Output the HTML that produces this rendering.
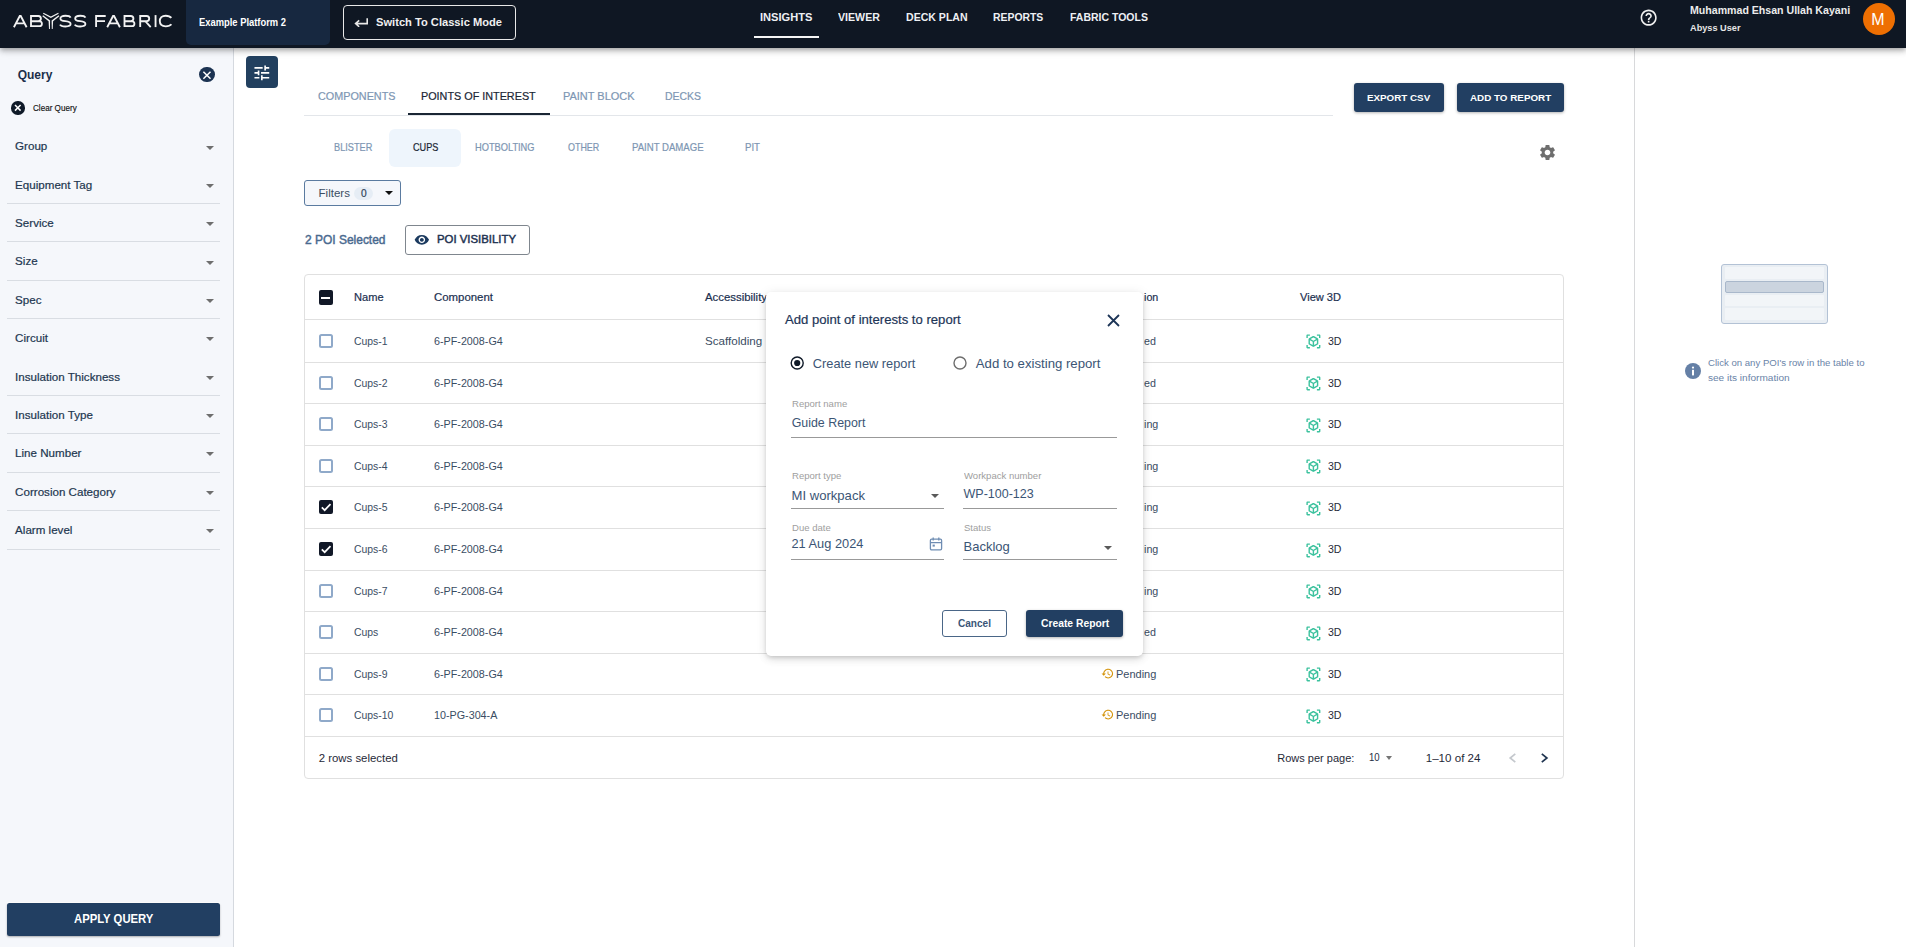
<!DOCTYPE html>
<html><head><meta charset="utf-8"><title>Abyss Fabric</title>
<style>
html,body{margin:0;padding:0;}
body{width:1906px;height:947px;overflow:hidden;position:relative;background:#fff;font-family:"Liberation Sans", sans-serif;}
body>div{position:absolute;box-sizing:content-box;}
.t{white-space:pre;}
</style></head><body>
<div style="left:0px;top:0px;width:1906px;height:48px;background:#0f1723;box-shadow:0 2px 4px -1px rgba(0,0,0,.2),0 4px 5px 0 rgba(0,0,0,.14),0 1px 10px 0 rgba(0,0,0,.12);z-index:5"></div>
<svg style="position:absolute;left:0px;top:0px;z-index:6" width="180" height="48" viewBox="0 0 180 48"><g fill="none" stroke="#f2f2f2" stroke-width="1.85" stroke-linejoin="miter" stroke-miterlimit="10">
<path d="M13.9 27.2 L19.75 15.95 H20.75 L26.6 27.2 M16.2 23.3 H24.3"/>
<path d="M31 16 H38.3 A2.6 2.6 0 0 1 38.3 21.2 H31 M31 21.2 H39.45 A2.45 2.45 0 0 1 39.45 26.1 H31 Z M31 15.1 V27"/>
<path d="M70.6 17.7 C70 16.3 68 15.8 65.4 15.8 C62.2 15.8 60.4 16.7 60.4 18.5 C60.4 20.6 62.6 21 65.4 21.2 C68.6 21.4 70.6 22 70.6 24.1 C70.6 25.9 68.6 26.5 65.4 26.5 C62.8 26.5 60.8 26.1 60 24.6"/>
<path d="M85.4 17.7 C84.8 16.3 82.8 15.8 80.2 15.8 C77 15.8 75.2 16.7 75.2 18.5 C75.2 20.6 77.4 21 80.2 21.2 C83.4 21.4 85.4 22 85.4 24.1 C85.4 25.9 83.4 26.5 80.2 26.5 C77.6 26.5 75.6 26.1 74.8 24.6"/>
<path d="M96.1 27.1 V16 H105.7 M96.1 21.1 H105"/>
<path d="M107.2 27.2 L113.05 15.95 H114.05 L119.9 27.2 M109.5 23.3 H117.6"/>
<path d="M124.5 16 H130.8 A2.6 2.6 0 0 1 130.8 21.2 H124.5 M124.5 21.2 H131.95 A2.45 2.45 0 0 1 131.95 26.1 H124.5 Z M124.5 15.1 V27"/>
<path d="M140.2 27.1 V16 H146.6 A2.6 2.6 0 0 1 146.6 21.2 H140.2 M145.3 21.2 L150.7 27.2"/>
<path d="M155.55 15.1 V27.1"/>
<path d="M171.3 17.9 C170.2 16.4 168.2 15.7 165.7 15.7 C161.9 15.7 159.8 18.1 159.8 21.1 C159.8 24.2 161.9 26.3 165.7 26.3 C168.2 26.3 170.3 25.6 171.4 24.2"/>
</g>
<g fill="#f2f2f2">
<path d="M43.5 12.8 L50.85 16.4 L58.2 12.8 L58.7 13.8 L50.85 17.9 L43.0 13.8 Z"/>
<path d="M42.3 16.3 L43.1 15.3 L50.1 20.4 L49.9 28.9 L49.0 28.9 L48.6 21.3 Z"/>
<path d="M59.4 16.3 L58.6 15.3 L51.6 20.4 L51.8 28.9 L52.7 28.9 L53.1 21.3 Z"/>
</g></svg>
<div style="left:186px;top:0px;width:144px;height:45px;background:#172840;border-radius:0 0 5px 5px;z-index:6"></div>
<div class="t" style="left:199px;top:18px;font-size:10px;line-height:10px;color:#ffffff;font-weight:700;transform:scaleX(0.9374);transform-origin:0 0;z-index:7">Example Platform 2</div>
<div style="left:343px;top:5px;width:171px;height:33px;border:1px solid #e8e8e8;border-radius:4px;z-index:6"></div>
<svg style="position:absolute;left:353px;top:15px;z-index:7" width="16" height="12" viewBox="0 0 16 12"><path d="M14.2 3.2 V8.6 H3.2 M6.2 5.4 L2.6 8.6 L6.2 11.8" fill="none" stroke="#e8e8e8" stroke-width="1.6"/></svg>
<div class="t" style="left:375.7px;top:17px;font-size:11.3px;line-height:11.3px;color:#f0f0f0;font-weight:700;transform:scaleX(0.9855);transform-origin:0 0;z-index:7">Switch To Classic Mode</div>
<div class="t" style="left:760px;top:12px;font-size:11.3px;line-height:11.3px;color:#eef0f3;font-weight:700;transform:scaleX(0.9820);transform-origin:0 0;z-index:7">INSIGHTS</div>
<div class="t" style="left:837.8px;top:12px;font-size:11.3px;line-height:11.3px;color:#eef0f3;font-weight:700;transform:scaleX(0.9399);transform-origin:0 0;z-index:7">VIEWER</div>
<div class="t" style="left:905.6px;top:12px;font-size:11.3px;line-height:11.3px;color:#eef0f3;font-weight:700;transform:scaleX(0.9347);transform-origin:0 0;z-index:7">DECK PLAN</div>
<div class="t" style="left:993.4px;top:12px;font-size:11.3px;line-height:11.3px;color:#eef0f3;font-weight:700;transform:scaleX(0.9211);transform-origin:0 0;z-index:7">REPORTS</div>
<div class="t" style="left:1069.9px;top:12px;font-size:11.3px;line-height:11.3px;color:#eef0f3;font-weight:700;transform:scaleX(0.9284);transform-origin:0 0;z-index:7">FABRIC TOOLS</div>
<div style="left:754px;top:36px;width:65px;height:2px;background:#f5f5f5;z-index:7"></div>
<svg style="position:absolute;left:1638.8px;top:8.3px;z-index:7" width="19.3" height="19.3" viewBox="0 0 24 24"><path d="M11 18h2v-2h-2v2zm1-16C6.48 2 2 6.48 2 12s4.48 10 10 10 10-4.48 10-10S17.52 2 12 2zm0 18c-4.41 0-8-3.59-8-8s3.59-8 8-8 8 3.59 8 8-3.59 8-8 8zm0-14c-2.21 0-4 1.79-4 4h2c0-1.1.9-2 2-2s2 .9 2 2c0 2-3 1.75-3 5h2c0-2.25 3-2.5 3-5 0-2.21-1.79-4-4-4z" fill="#f0f0f0"/></svg>
<div class="t" style="left:1689.9px;top:4px;font-size:11.6px;line-height:11.6px;color:#ececec;font-weight:700;transform:scaleX(0.9136);transform-origin:0 0;z-index:7">Muhammad Ehsan Ullah Kayani</div>
<div class="t" style="left:1689.9px;top:23px;font-size:9.6px;line-height:9.6px;color:#e6e6e6;font-weight:700;transform:scaleX(0.9565);transform-origin:0 0;z-index:7">Abyss User</div>
<div style="left:1863px;top:3px;width:32px;height:32px;background:#ee6f02;border-radius:50%;z-index:7"></div>
<div class="t" style="left:1871.3px;top:12px;font-size:16px;line-height:16px;color:#ffffff;font-weight:400;z-index:8">M</div>
<div style="left:0px;top:48px;width:233px;height:899px;background:#f5f7fb;border-right:1px solid #d5d9df"></div>
<div class="t" style="left:17.7px;top:69px;font-size:12px;line-height:12px;color:#1b2f4a;font-weight:700;">Query</div>
<div style="left:198.8px;top:66.5px;width:15.8px;height:15.8px;background:#1c3352;border-radius:50%"></div>
<svg style="position:absolute;left:198.8px;top:66.5px;" width="16" height="16" viewBox="0 0 16 16"><path d="M4.4 4.7 L11.5 11.7 M11.5 4.7 L4.4 11.7" stroke="#fff" stroke-width="1.5"/></svg>
<div style="left:11.4px;top:101.2px;width:13.4px;height:13.4px;background:#0f1a28;border-radius:50%"></div>
<svg style="position:absolute;left:11.4px;top:101.2px;" width="14" height="14" viewBox="0 0 14 14"><path d="M4 4 L9.6 9.6 M9.6 4 L4 9.6" stroke="#fff" stroke-width="1.5"/></svg>
<div class="t" style="left:32.5px;top:104px;font-size:8.8px;line-height:8.8px;color:#111;font-weight:400;transform:scaleX(0.9215);transform-origin:0 0;-webkit-text-stroke:0.15px currentColor">Clear Query</div>
<div class="t" style="left:15.1px;top:140px;font-size:11.6px;line-height:11.6px;color:#22364f;font-weight:400;-webkit-text-stroke:0.2px currentColor">Group</div>
<div style="left:206.2px;top:146px;width:0;height:0;border-left:4.1px solid transparent;border-right:4.1px solid transparent;border-top:4.2px solid #6e6e6e;"></div>
<div class="t" style="left:15.1px;top:179px;font-size:11.6px;line-height:11.6px;color:#22364f;font-weight:400;-webkit-text-stroke:0.2px currentColor">Equipment Tag</div>
<div style="left:206.2px;top:184px;width:0;height:0;border-left:4.1px solid transparent;border-right:4.1px solid transparent;border-top:4.2px solid #6e6e6e;"></div>
<div class="t" style="left:15.1px;top:217px;font-size:11.6px;line-height:11.6px;color:#22364f;font-weight:400;-webkit-text-stroke:0.2px currentColor">Service</div>
<div style="left:206.2px;top:222px;width:0;height:0;border-left:4.1px solid transparent;border-right:4.1px solid transparent;border-top:4.2px solid #6e6e6e;"></div>
<div class="t" style="left:15.1px;top:255px;font-size:11.6px;line-height:11.6px;color:#22364f;font-weight:400;-webkit-text-stroke:0.2px currentColor">Size</div>
<div style="left:206.2px;top:261px;width:0;height:0;border-left:4.1px solid transparent;border-right:4.1px solid transparent;border-top:4.2px solid #6e6e6e;"></div>
<div class="t" style="left:15.1px;top:294px;font-size:11.6px;line-height:11.6px;color:#22364f;font-weight:400;-webkit-text-stroke:0.2px currentColor">Spec</div>
<div style="left:206.2px;top:299px;width:0;height:0;border-left:4.1px solid transparent;border-right:4.1px solid transparent;border-top:4.2px solid #6e6e6e;"></div>
<div class="t" style="left:15.1px;top:332px;font-size:11.6px;line-height:11.6px;color:#22364f;font-weight:400;-webkit-text-stroke:0.2px currentColor">Circuit</div>
<div style="left:206.2px;top:337px;width:0;height:0;border-left:4.1px solid transparent;border-right:4.1px solid transparent;border-top:4.2px solid #6e6e6e;"></div>
<div class="t" style="left:15.1px;top:371px;font-size:11.6px;line-height:11.6px;color:#22364f;font-weight:400;-webkit-text-stroke:0.2px currentColor">Insulation Thickness</div>
<div style="left:206.2px;top:376px;width:0;height:0;border-left:4.1px solid transparent;border-right:4.1px solid transparent;border-top:4.2px solid #6e6e6e;"></div>
<div class="t" style="left:15.1px;top:409px;font-size:11.6px;line-height:11.6px;color:#22364f;font-weight:400;-webkit-text-stroke:0.2px currentColor">Insulation Type</div>
<div style="left:206.2px;top:414px;width:0;height:0;border-left:4.1px solid transparent;border-right:4.1px solid transparent;border-top:4.2px solid #6e6e6e;"></div>
<div class="t" style="left:15.1px;top:447px;font-size:11.6px;line-height:11.6px;color:#22364f;font-weight:400;-webkit-text-stroke:0.2px currentColor">Line Number</div>
<div style="left:206.2px;top:452px;width:0;height:0;border-left:4.1px solid transparent;border-right:4.1px solid transparent;border-top:4.2px solid #6e6e6e;"></div>
<div class="t" style="left:15.1px;top:486px;font-size:11.6px;line-height:11.6px;color:#22364f;font-weight:400;-webkit-text-stroke:0.2px currentColor">Corrosion Category</div>
<div style="left:206.2px;top:491px;width:0;height:0;border-left:4.1px solid transparent;border-right:4.1px solid transparent;border-top:4.2px solid #6e6e6e;"></div>
<div class="t" style="left:15.1px;top:524px;font-size:11.6px;line-height:11.6px;color:#22364f;font-weight:400;-webkit-text-stroke:0.2px currentColor">Alarm level</div>
<div style="left:206.2px;top:529px;width:0;height:0;border-left:4.1px solid transparent;border-right:4.1px solid transparent;border-top:4.2px solid #6e6e6e;"></div>
<div style="left:7px;top:203px;width:213px;height:1px;background:#d9dde3"></div>
<div style="left:7px;top:241px;width:213px;height:1px;background:#d9dde3"></div>
<div style="left:7px;top:280px;width:213px;height:1px;background:#d9dde3"></div>
<div style="left:7px;top:318px;width:213px;height:1px;background:#d9dde3"></div>
<div style="left:7px;top:395px;width:213px;height:1px;background:#d9dde3"></div>
<div style="left:7px;top:433px;width:213px;height:1px;background:#d9dde3"></div>
<div style="left:7px;top:472px;width:213px;height:1px;background:#d9dde3"></div>
<div style="left:7px;top:510px;width:213px;height:1px;background:#d9dde3"></div>
<div style="left:7px;top:549px;width:213px;height:1px;background:#d9dde3"></div>
<div style="left:7px;top:902px;width:213px;height:1px;background:#ffffff"></div>
<div style="left:7px;top:903px;width:213px;height:33px;background:#223f62;border-radius:2.5px;box-shadow:0 1px 2px rgba(0,0,0,.3)"></div>
<div class="t" style="left:73.8px;top:913px;font-size:12.3px;line-height:12.3px;color:#ffffff;font-weight:700;transform:scaleX(0.9196);transform-origin:0 0;">APPLY QUERY</div>
<div style="left:1634px;top:48px;width:1px;height:899px;background:#d8d9db"></div>
<div style="left:1721px;top:264px;width:105px;height:58px;background:#e9eef3;border:1px solid #b3c2d5;border-radius:3px"></div>
<div style="left:1725px;top:267px;width:99px;height:12px;background:#f2f5f8;border-radius:1px"></div>
<div style="left:1725px;top:295px;width:99px;height:11px;background:#f2f5f8;border-radius:1px"></div>
<div style="left:1725px;top:308px;width:99px;height:12px;background:#f2f5f8;border-radius:1px"></div>
<div style="left:1725px;top:281px;width:97px;height:10px;background:#cbd4df;border:1px solid #a9b8cb;border-radius:2px"></div>
<div style="left:1684.5px;top:362.5px;width:16px;height:16px;background:#6580a6;border-radius:50%"></div>
<svg style="position:absolute;left:1684.5px;top:362.5px;" width="16" height="16" viewBox="0 0 16 16"><circle cx="8" cy="4.6" r="1.1" fill="#fff"/><rect x="7" y="6.8" width="2" height="5.6" fill="#fff"/></svg>
<div class="t" style="left:1708px;top:358px;font-size:9.6px;line-height:9.6px;color:#6a84a8;font-weight:400;">Click on any POI's row in the table to</div>
<div class="t" style="left:1708px;top:373px;font-size:9.6px;line-height:9.6px;color:#6a84a8;font-weight:400;transform:scaleX(1.0480);transform-origin:0 0;">see its information</div>
<div style="left:246px;top:56px;width:32px;height:32px;background:#22405f;border-radius:4px"></div>
<svg style="position:absolute;left:251.6px;top:62.5px;" width="19.7" height="19.7" viewBox="0 0 24 24"><path d="M3 17v2h6v-2H3zM3 5v2h10V5H3zm10 16v-2h8v-2h-8v-2h-2v6h2zM7 9v2H3v2h4v2h2V9H7zm14 4v-2H11v2h10zm-6-4h2V7h4V5h-4V3h-2v6z" fill="#ffffff"/></svg>
<div style="left:304px;top:115px;width:1029px;height:1px;background:#e3e6ea"></div>
<div class="t" style="left:317.7px;top:91px;font-size:11.3px;line-height:11.3px;color:#7d96b3;font-weight:400;transform:scaleX(0.9572);transform-origin:0 0;-webkit-text-stroke:0.2px currentColor">COMPONENTS</div>
<div class="t" style="left:421.3px;top:91px;font-size:11.3px;line-height:11.3px;color:#1a2634;font-weight:400;transform:scaleX(0.9567);transform-origin:0 0;-webkit-text-stroke:0.2px currentColor">POINTS OF INTEREST</div>
<div class="t" style="left:562.5px;top:91px;font-size:11.3px;line-height:11.3px;color:#7d96b3;font-weight:400;transform:scaleX(0.9705);transform-origin:0 0;-webkit-text-stroke:0.2px currentColor">PAINT BLOCK</div>
<div class="t" style="left:665px;top:91px;font-size:11.3px;line-height:11.3px;color:#7d96b3;font-weight:400;transform:scaleX(0.9249);transform-origin:0 0;-webkit-text-stroke:0.2px currentColor">DECKS</div>
<div style="left:408px;top:113px;width:142px;height:2px;background:#1a2634"></div>
<div style="left:1354px;top:83px;width:90px;height:29px;background:#223f62;border-radius:3px;box-shadow:0 1px 3px rgba(0,0,0,.3)"></div>
<div class="t" style="left:1367.1px;top:93px;font-size:9.8px;line-height:9.8px;color:#ffffff;font-weight:700;transform:scaleX(1.0007);transform-origin:0 0;">EXPORT CSV</div>
<div style="left:1457px;top:83px;width:107px;height:29px;background:#223f62;border-radius:3px;box-shadow:0 1px 3px rgba(0,0,0,.3)"></div>
<div class="t" style="left:1469.5px;top:93px;font-size:9.8px;line-height:9.8px;color:#ffffff;font-weight:700;transform:scaleX(1.0034);transform-origin:0 0;">ADD TO REPORT</div>
<svg style="position:absolute;left:1537.9px;top:142.9px;" width="19" height="19" viewBox="0 0 24 24"><path d="M19.14 12.94c.04-.3.06-.61.06-.94 0-.32-.02-.64-.07-.94l2.03-1.58c.18-.14.23-.41.12-.61l-1.92-3.32c-.12-.22-.37-.29-.59-.22l-2.39.96c-.5-.38-1.03-.7-1.62-.94l-.36-2.54c-.04-.24-.24-.41-.48-.41h-3.84c-.24 0-.43.17-.47.41l-.36 2.54c-.59.24-1.13.57-1.62.94l-2.39-.96c-.22-.08-.47 0-.59.22L2.74 8.87c-.12.21-.08.47.12.61l2.03 1.58c-.05.3-.09.63-.09.94s.02.64.07.94l-2.03 1.58c-.18.14-.23.41-.12.61l1.92 3.32c.12.22.37.29.59.22l2.39-.96c.5.38 1.03.7 1.62.94l.36 2.54c.05.24.24.41.48.41h3.84c.24 0 .44-.17.47-.41l.36-2.54c.59-.24 1.13-.56 1.62-.94l2.39.96c.22.08.47 0 .59-.22l1.92-3.32c.12-.22.07-.47-.12-.61l-2.01-1.58zM12 15.6c-1.98 0-3.6-1.62-3.6-3.6s1.62-3.6 3.6-3.6 3.6 1.62 3.6 3.6-1.62 3.6-3.6 3.6z" fill="#6e6e6e"/></svg>
<div style="left:389px;top:129px;width:72px;height:38px;background:#eef5fc;border-radius:6px"></div>
<div class="t" style="left:334px;top:143px;font-size:10.3px;line-height:10.3px;color:#7d96b3;font-weight:400;transform:scaleX(0.8923);transform-origin:0 0;-webkit-text-stroke:0.2px currentColor">BLISTER</div>
<div class="t" style="left:412.8px;top:143px;font-size:10.3px;line-height:10.3px;color:#1a2634;font-weight:400;transform:scaleX(0.8878);transform-origin:0 0;-webkit-text-stroke:0.2px currentColor">CUPS</div>
<div class="t" style="left:474.5px;top:143px;font-size:10.3px;line-height:10.3px;color:#7d96b3;font-weight:400;transform:scaleX(0.8992);transform-origin:0 0;-webkit-text-stroke:0.2px currentColor">HOTBOLTING</div>
<div class="t" style="left:567.7px;top:143px;font-size:10.3px;line-height:10.3px;color:#7d96b3;font-weight:400;transform:scaleX(0.8683);transform-origin:0 0;-webkit-text-stroke:0.2px currentColor">OTHER</div>
<div class="t" style="left:632px;top:143px;font-size:10.3px;line-height:10.3px;color:#7d96b3;font-weight:400;transform:scaleX(0.9316);transform-origin:0 0;-webkit-text-stroke:0.2px currentColor">PAINT DAMAGE</div>
<div class="t" style="left:744.9px;top:143px;font-size:10.3px;line-height:10.3px;color:#7d96b3;font-weight:400;transform:scaleX(0.9357);transform-origin:0 0;-webkit-text-stroke:0.2px currentColor">PIT</div>
<div style="left:304px;top:180px;width:95px;height:24px;border:1px solid #5b7ba0;border-radius:3px;background:#f5f7fb"></div>
<div class="t" style="left:318.6px;top:188px;font-size:11.5px;line-height:11.5px;color:#3b4d63;font-weight:400;">Filters</div>
<div style="left:354px;top:187px;width:19px;height:13px;background:#e6edf5;border-radius:7px"></div>
<div class="t" style="left:360.9px;top:189px;font-size:10.2px;line-height:10.2px;color:#2f4258;font-weight:400;-webkit-text-stroke:0.2px currentColor">0</div>
<div style="left:384.8px;top:191.2px;width:0;height:0;border-left:4.1px solid transparent;border-right:4.1px solid transparent;border-top:4.2px solid #111;"></div>
<div class="t" style="left:304.6px;top:234px;font-size:12.4px;line-height:12.4px;color:#4a6a8f;font-weight:400;transform:scaleX(0.9659);transform-origin:0 0;-webkit-text-stroke:0.45px currentColor">2 POI Selected</div>
<div style="left:405px;top:225px;width:123px;height:27.5px;border:1px solid #7f868e;border-radius:3px"></div>
<svg style="position:absolute;left:414.1px;top:232.05px;" width="15.7" height="15.7" viewBox="0 0 24 24"><path d="M12 4.5C7 4.5 2.73 7.61 1 12c1.73 4.39 6 7.5 11 7.5s9.27-3.11 11-7.5c-1.73-4.39-6-7.5-11-7.5zM12 17c-2.76 0-5-2.24-5-5s2.24-5 5-5 5 2.24 5 5-2.24 5-5 5zm0-8c-1.66 0-3 1.34-3 3s1.34 3 3 3 3-1.34 3-3-1.34-3-3-3z" fill="#1b3a5f"/></svg>
<div class="t" style="left:437px;top:234px;font-size:11.3px;line-height:11.3px;color:#1d3150;font-weight:400;transform:scaleX(1.0066);transform-origin:0 0;-webkit-text-stroke:0.45px currentColor">POI VISIBILITY</div>
<div style="left:304px;top:274px;width:1258px;height:503px;border:1px solid #e0e0e0;border-radius:4px;background:#fff"></div>
<div style="left:305px;top:319px;width:1258px;height:1px;background:#e0e0e0"></div>
<div style="left:305px;top:362px;width:1258px;height:1px;background:#e0e0e0"></div>
<div style="left:305px;top:403px;width:1258px;height:1px;background:#e0e0e0"></div>
<div style="left:305px;top:445px;width:1258px;height:1px;background:#e0e0e0"></div>
<div style="left:305px;top:486px;width:1258px;height:1px;background:#e0e0e0"></div>
<div style="left:305px;top:528px;width:1258px;height:1px;background:#e0e0e0"></div>
<div style="left:305px;top:570px;width:1258px;height:1px;background:#e0e0e0"></div>
<div style="left:305px;top:611px;width:1258px;height:1px;background:#e0e0e0"></div>
<div style="left:305px;top:653px;width:1258px;height:1px;background:#e0e0e0"></div>
<div style="left:305px;top:694px;width:1258px;height:1px;background:#e0e0e0"></div>
<div style="left:305px;top:736px;width:1258px;height:1px;background:#e0e0e0"></div>
<div style="left:318.5px;top:290.3px;width:14.3px;height:14.3px;background:#111827;border-radius:2px"></div>
<div style="left:321.3px;top:296.5px;width:8.7px;height:2px;background:#fff"></div>
<div class="t" style="left:353.9px;top:292px;font-size:11.5px;line-height:11.5px;color:#1b3050;font-weight:400;transform:scaleX(0.9646);transform-origin:0 0;-webkit-text-stroke:0.2px currentColor">Name</div>
<div class="t" style="left:433.8px;top:292px;font-size:11.5px;line-height:11.5px;color:#1b3050;font-weight:400;transform:scaleX(0.9921);transform-origin:0 0;-webkit-text-stroke:0.2px currentColor">Component</div>
<div class="t" style="left:704.5px;top:292px;font-size:11.5px;line-height:11.5px;color:#1b3050;font-weight:400;transform:scaleX(0.99);transform-origin:0 0;-webkit-text-stroke:0.2px currentColor">Accessibility</div>
<div class="t" style="left:1144px;top:292px;font-size:11.5px;line-height:11.5px;color:#1b3050;font-weight:400;transform:scaleX(0.93);transform-origin:0 0;-webkit-text-stroke:0.2px currentColor">ion</div>
<div class="t" style="left:1300.3px;top:292px;font-size:11.5px;line-height:11.5px;color:#1b3050;font-weight:400;transform:scaleX(0.9619);transform-origin:0 0;-webkit-text-stroke:0.2px currentColor">View 3D</div>
<div style="left:318.5px;top:333.5px;width:14.2px;height:14.2px;border:2px solid #8fa9c9;border-radius:2.5px;box-sizing:border-box"></div>
<div class="t" style="left:353.9px;top:336px;font-size:11.5px;line-height:11.5px;color:#3a4d63;font-weight:400;transform:scaleX(0.905);transform-origin:0 0;">Cups-1</div>
<div class="t" style="left:433.8px;top:336px;font-size:11.5px;line-height:11.5px;color:#3a4d63;font-weight:400;transform:scaleX(0.935);transform-origin:0 0;">6-PF-2008-G4</div>
<div class="t" style="left:704.5px;top:336px;font-size:11.5px;line-height:11.5px;color:#3a4d63;font-weight:400;transform:scaleX(1.0088);transform-origin:0 0;">Scaffolding</div>
<div class="t" style="left:1144px;top:336px;font-size:11.5px;line-height:11.5px;color:#3a4d63;font-weight:400;transform:scaleX(0.93);transform-origin:0 0;">ed</div>
<svg style="position:absolute;left:1304.5px;top:333.4px;" width="16.8" height="16.8" viewBox="0 0 24 24"><path d="M18.25 7.6l-5.5-3.18c-.46-.27-1.04-.27-1.5 0L5.75 7.6c-.46.27-.75.76-.75 1.3v6.35c0 .54.29 1.03.75 1.3l5.5 3.18c.46.27 1.04.27 1.5 0l5.5-3.18c.46-.27.75-.76.75-1.3V8.9c0-.54-.29-1.03-.75-1.3zM7 14.96v-4.62l4 2.32v4.61l-4-2.31zm5-4.04L8 8.61l4-2.31 4 2.31-4 2.31zm1 6.34v-4.61l4-2.32v4.62l-4 2.31zM7 2H3.5C2.67 2 2 2.67 2 3.5V7h2V4h3V2zm10 0h3.5c.83 0 1.5.67 1.5 1.5V7h-2V4h-3V2zM7 22H3.5c-.83 0-1.5-.67-1.5-1.5V17h2v3h3v2zm10 0h3.5c.83 0 1.5-.67 1.5-1.5V17h-2v3h-3v2z" fill="#3cc29e"/></svg>
<div class="t" style="left:1327.9px;top:336px;font-size:11.5px;line-height:11.5px;color:#1f2937;font-weight:400;transform:scaleX(0.9182);transform-origin:0 0;">3D</div>
<div style="left:318.5px;top:375.5px;width:14.2px;height:14.2px;border:2px solid #8fa9c9;border-radius:2.5px;box-sizing:border-box"></div>
<div class="t" style="left:353.9px;top:378px;font-size:11.5px;line-height:11.5px;color:#3a4d63;font-weight:400;transform:scaleX(0.905);transform-origin:0 0;">Cups-2</div>
<div class="t" style="left:433.8px;top:378px;font-size:11.5px;line-height:11.5px;color:#3a4d63;font-weight:400;transform:scaleX(0.935);transform-origin:0 0;">6-PF-2008-G4</div>
<div class="t" style="left:1144px;top:378px;font-size:11.5px;line-height:11.5px;color:#3a4d63;font-weight:400;transform:scaleX(0.93);transform-origin:0 0;">ed</div>
<svg style="position:absolute;left:1304.5px;top:375.4px;" width="16.8" height="16.8" viewBox="0 0 24 24"><path d="M18.25 7.6l-5.5-3.18c-.46-.27-1.04-.27-1.5 0L5.75 7.6c-.46.27-.75.76-.75 1.3v6.35c0 .54.29 1.03.75 1.3l5.5 3.18c.46.27 1.04.27 1.5 0l5.5-3.18c.46-.27.75-.76.75-1.3V8.9c0-.54-.29-1.03-.75-1.3zM7 14.96v-4.62l4 2.32v4.61l-4-2.31zm5-4.04L8 8.61l4-2.31 4 2.31-4 2.31zm1 6.34v-4.61l4-2.32v4.62l-4 2.31zM7 2H3.5C2.67 2 2 2.67 2 3.5V7h2V4h3V2zm10 0h3.5c.83 0 1.5.67 1.5 1.5V7h-2V4h-3V2zM7 22H3.5c-.83 0-1.5-.67-1.5-1.5V17h2v3h3v2zm10 0h3.5c.83 0 1.5-.67 1.5-1.5V17h-2v3h-3v2z" fill="#3cc29e"/></svg>
<div class="t" style="left:1327.9px;top:378px;font-size:11.5px;line-height:11.5px;color:#1f2937;font-weight:400;transform:scaleX(0.9182);transform-origin:0 0;">3D</div>
<div style="left:318.5px;top:417.0px;width:14.2px;height:14.2px;border:2px solid #8fa9c9;border-radius:2.5px;box-sizing:border-box"></div>
<div class="t" style="left:353.9px;top:419px;font-size:11.5px;line-height:11.5px;color:#3a4d63;font-weight:400;transform:scaleX(0.905);transform-origin:0 0;">Cups-3</div>
<div class="t" style="left:433.8px;top:419px;font-size:11.5px;line-height:11.5px;color:#3a4d63;font-weight:400;transform:scaleX(0.935);transform-origin:0 0;">6-PF-2008-G4</div>
<div class="t" style="left:1144px;top:419px;font-size:11.5px;line-height:11.5px;color:#3a4d63;font-weight:400;transform:scaleX(0.93);transform-origin:0 0;">ing</div>
<svg style="position:absolute;left:1304.5px;top:416.9px;" width="16.8" height="16.8" viewBox="0 0 24 24"><path d="M18.25 7.6l-5.5-3.18c-.46-.27-1.04-.27-1.5 0L5.75 7.6c-.46.27-.75.76-.75 1.3v6.35c0 .54.29 1.03.75 1.3l5.5 3.18c.46.27 1.04.27 1.5 0l5.5-3.18c.46-.27.75-.76.75-1.3V8.9c0-.54-.29-1.03-.75-1.3zM7 14.96v-4.62l4 2.32v4.61l-4-2.31zm5-4.04L8 8.61l4-2.31 4 2.31-4 2.31zm1 6.34v-4.61l4-2.32v4.62l-4 2.31zM7 2H3.5C2.67 2 2 2.67 2 3.5V7h2V4h3V2zm10 0h3.5c.83 0 1.5.67 1.5 1.5V7h-2V4h-3V2zM7 22H3.5c-.83 0-1.5-.67-1.5-1.5V17h2v3h3v2zm10 0h3.5c.83 0 1.5-.67 1.5-1.5V17h-2v3h-3v2z" fill="#3cc29e"/></svg>
<div class="t" style="left:1327.9px;top:419px;font-size:11.5px;line-height:11.5px;color:#1f2937;font-weight:400;transform:scaleX(0.9182);transform-origin:0 0;">3D</div>
<div style="left:318.5px;top:458.5px;width:14.2px;height:14.2px;border:2px solid #8fa9c9;border-radius:2.5px;box-sizing:border-box"></div>
<div class="t" style="left:353.9px;top:461px;font-size:11.5px;line-height:11.5px;color:#3a4d63;font-weight:400;transform:scaleX(0.905);transform-origin:0 0;">Cups-4</div>
<div class="t" style="left:433.8px;top:461px;font-size:11.5px;line-height:11.5px;color:#3a4d63;font-weight:400;transform:scaleX(0.935);transform-origin:0 0;">6-PF-2008-G4</div>
<div class="t" style="left:1144px;top:461px;font-size:11.5px;line-height:11.5px;color:#3a4d63;font-weight:400;transform:scaleX(0.93);transform-origin:0 0;">ing</div>
<svg style="position:absolute;left:1304.5px;top:458.4px;" width="16.8" height="16.8" viewBox="0 0 24 24"><path d="M18.25 7.6l-5.5-3.18c-.46-.27-1.04-.27-1.5 0L5.75 7.6c-.46.27-.75.76-.75 1.3v6.35c0 .54.29 1.03.75 1.3l5.5 3.18c.46.27 1.04.27 1.5 0l5.5-3.18c.46-.27.75-.76.75-1.3V8.9c0-.54-.29-1.03-.75-1.3zM7 14.96v-4.62l4 2.32v4.61l-4-2.31zm5-4.04L8 8.61l4-2.31 4 2.31-4 2.31zm1 6.34v-4.61l4-2.32v4.62l-4 2.31zM7 2H3.5C2.67 2 2 2.67 2 3.5V7h2V4h3V2zm10 0h3.5c.83 0 1.5.67 1.5 1.5V7h-2V4h-3V2zM7 22H3.5c-.83 0-1.5-.67-1.5-1.5V17h2v3h3v2zm10 0h3.5c.83 0 1.5-.67 1.5-1.5V17h-2v3h-3v2z" fill="#3cc29e"/></svg>
<div class="t" style="left:1327.9px;top:461px;font-size:11.5px;line-height:11.5px;color:#1f2937;font-weight:400;transform:scaleX(0.9182);transform-origin:0 0;">3D</div>
<div style="left:318.5px;top:500.0px;width:14.2px;height:14.2px;background:#111827;border-radius:2px"></div>
<svg style="position:absolute;left:318.5px;top:500.0px;" width="14.2" height="14.2" viewBox="0 0 14.2 14.2"><path d="M2.8 7.3 L5.7 10.2 L11.5 4.2" fill="none" stroke="#fff" stroke-width="1.7"/></svg>
<div class="t" style="left:353.9px;top:502px;font-size:11.5px;line-height:11.5px;color:#3a4d63;font-weight:400;transform:scaleX(0.905);transform-origin:0 0;">Cups-5</div>
<div class="t" style="left:433.8px;top:502px;font-size:11.5px;line-height:11.5px;color:#3a4d63;font-weight:400;transform:scaleX(0.935);transform-origin:0 0;">6-PF-2008-G4</div>
<div class="t" style="left:1144px;top:502px;font-size:11.5px;line-height:11.5px;color:#3a4d63;font-weight:400;transform:scaleX(0.93);transform-origin:0 0;">ing</div>
<svg style="position:absolute;left:1304.5px;top:499.9px;" width="16.8" height="16.8" viewBox="0 0 24 24"><path d="M18.25 7.6l-5.5-3.18c-.46-.27-1.04-.27-1.5 0L5.75 7.6c-.46.27-.75.76-.75 1.3v6.35c0 .54.29 1.03.75 1.3l5.5 3.18c.46.27 1.04.27 1.5 0l5.5-3.18c.46-.27.75-.76.75-1.3V8.9c0-.54-.29-1.03-.75-1.3zM7 14.96v-4.62l4 2.32v4.61l-4-2.31zm5-4.04L8 8.61l4-2.31 4 2.31-4 2.31zm1 6.34v-4.61l4-2.32v4.62l-4 2.31zM7 2H3.5C2.67 2 2 2.67 2 3.5V7h2V4h3V2zm10 0h3.5c.83 0 1.5.67 1.5 1.5V7h-2V4h-3V2zM7 22H3.5c-.83 0-1.5-.67-1.5-1.5V17h2v3h3v2zm10 0h3.5c.83 0 1.5-.67 1.5-1.5V17h-2v3h-3v2z" fill="#3cc29e"/></svg>
<div class="t" style="left:1327.9px;top:502px;font-size:11.5px;line-height:11.5px;color:#1f2937;font-weight:400;transform:scaleX(0.9182);transform-origin:0 0;">3D</div>
<div style="left:318.5px;top:542.0px;width:14.2px;height:14.2px;background:#111827;border-radius:2px"></div>
<svg style="position:absolute;left:318.5px;top:542.0px;" width="14.2" height="14.2" viewBox="0 0 14.2 14.2"><path d="M2.8 7.3 L5.7 10.2 L11.5 4.2" fill="none" stroke="#fff" stroke-width="1.7"/></svg>
<div class="t" style="left:353.9px;top:544px;font-size:11.5px;line-height:11.5px;color:#3a4d63;font-weight:400;transform:scaleX(0.905);transform-origin:0 0;">Cups-6</div>
<div class="t" style="left:433.8px;top:544px;font-size:11.5px;line-height:11.5px;color:#3a4d63;font-weight:400;transform:scaleX(0.935);transform-origin:0 0;">6-PF-2008-G4</div>
<div class="t" style="left:1144px;top:544px;font-size:11.5px;line-height:11.5px;color:#3a4d63;font-weight:400;transform:scaleX(0.93);transform-origin:0 0;">ing</div>
<svg style="position:absolute;left:1304.5px;top:541.9px;" width="16.8" height="16.8" viewBox="0 0 24 24"><path d="M18.25 7.6l-5.5-3.18c-.46-.27-1.04-.27-1.5 0L5.75 7.6c-.46.27-.75.76-.75 1.3v6.35c0 .54.29 1.03.75 1.3l5.5 3.18c.46.27 1.04.27 1.5 0l5.5-3.18c.46-.27.75-.76.75-1.3V8.9c0-.54-.29-1.03-.75-1.3zM7 14.96v-4.62l4 2.32v4.61l-4-2.31zm5-4.04L8 8.61l4-2.31 4 2.31-4 2.31zm1 6.34v-4.61l4-2.32v4.62l-4 2.31zM7 2H3.5C2.67 2 2 2.67 2 3.5V7h2V4h3V2zm10 0h3.5c.83 0 1.5.67 1.5 1.5V7h-2V4h-3V2zM7 22H3.5c-.83 0-1.5-.67-1.5-1.5V17h2v3h3v2zm10 0h3.5c.83 0 1.5-.67 1.5-1.5V17h-2v3h-3v2z" fill="#3cc29e"/></svg>
<div class="t" style="left:1327.9px;top:544px;font-size:11.5px;line-height:11.5px;color:#1f2937;font-weight:400;transform:scaleX(0.9182);transform-origin:0 0;">3D</div>
<div style="left:318.5px;top:583.5px;width:14.2px;height:14.2px;border:2px solid #8fa9c9;border-radius:2.5px;box-sizing:border-box"></div>
<div class="t" style="left:353.9px;top:586px;font-size:11.5px;line-height:11.5px;color:#3a4d63;font-weight:400;transform:scaleX(0.905);transform-origin:0 0;">Cups-7</div>
<div class="t" style="left:433.8px;top:586px;font-size:11.5px;line-height:11.5px;color:#3a4d63;font-weight:400;transform:scaleX(0.935);transform-origin:0 0;">6-PF-2008-G4</div>
<div class="t" style="left:1144px;top:586px;font-size:11.5px;line-height:11.5px;color:#3a4d63;font-weight:400;transform:scaleX(0.93);transform-origin:0 0;">ing</div>
<svg style="position:absolute;left:1304.5px;top:583.4px;" width="16.8" height="16.8" viewBox="0 0 24 24"><path d="M18.25 7.6l-5.5-3.18c-.46-.27-1.04-.27-1.5 0L5.75 7.6c-.46.27-.75.76-.75 1.3v6.35c0 .54.29 1.03.75 1.3l5.5 3.18c.46.27 1.04.27 1.5 0l5.5-3.18c.46-.27.75-.76.75-1.3V8.9c0-.54-.29-1.03-.75-1.3zM7 14.96v-4.62l4 2.32v4.61l-4-2.31zm5-4.04L8 8.61l4-2.31 4 2.31-4 2.31zm1 6.34v-4.61l4-2.32v4.62l-4 2.31zM7 2H3.5C2.67 2 2 2.67 2 3.5V7h2V4h3V2zm10 0h3.5c.83 0 1.5.67 1.5 1.5V7h-2V4h-3V2zM7 22H3.5c-.83 0-1.5-.67-1.5-1.5V17h2v3h3v2zm10 0h3.5c.83 0 1.5-.67 1.5-1.5V17h-2v3h-3v2z" fill="#3cc29e"/></svg>
<div class="t" style="left:1327.9px;top:586px;font-size:11.5px;line-height:11.5px;color:#1f2937;font-weight:400;transform:scaleX(0.9182);transform-origin:0 0;">3D</div>
<div style="left:318.5px;top:625.0px;width:14.2px;height:14.2px;border:2px solid #8fa9c9;border-radius:2.5px;box-sizing:border-box"></div>
<div class="t" style="left:353.9px;top:627px;font-size:11.5px;line-height:11.5px;color:#3a4d63;font-weight:400;transform:scaleX(0.905);transform-origin:0 0;">Cups</div>
<div class="t" style="left:433.8px;top:627px;font-size:11.5px;line-height:11.5px;color:#3a4d63;font-weight:400;transform:scaleX(0.935);transform-origin:0 0;">6-PF-2008-G4</div>
<div class="t" style="left:1144px;top:627px;font-size:11.5px;line-height:11.5px;color:#3a4d63;font-weight:400;transform:scaleX(0.93);transform-origin:0 0;">ed</div>
<svg style="position:absolute;left:1304.5px;top:624.9px;" width="16.8" height="16.8" viewBox="0 0 24 24"><path d="M18.25 7.6l-5.5-3.18c-.46-.27-1.04-.27-1.5 0L5.75 7.6c-.46.27-.75.76-.75 1.3v6.35c0 .54.29 1.03.75 1.3l5.5 3.18c.46.27 1.04.27 1.5 0l5.5-3.18c.46-.27.75-.76.75-1.3V8.9c0-.54-.29-1.03-.75-1.3zM7 14.96v-4.62l4 2.32v4.61l-4-2.31zm5-4.04L8 8.61l4-2.31 4 2.31-4 2.31zm1 6.34v-4.61l4-2.32v4.62l-4 2.31zM7 2H3.5C2.67 2 2 2.67 2 3.5V7h2V4h3V2zm10 0h3.5c.83 0 1.5.67 1.5 1.5V7h-2V4h-3V2zM7 22H3.5c-.83 0-1.5-.67-1.5-1.5V17h2v3h3v2zm10 0h3.5c.83 0 1.5-.67 1.5-1.5V17h-2v3h-3v2z" fill="#3cc29e"/></svg>
<div class="t" style="left:1327.9px;top:627px;font-size:11.5px;line-height:11.5px;color:#1f2937;font-weight:400;transform:scaleX(0.9182);transform-origin:0 0;">3D</div>
<div style="left:318.5px;top:666.5px;width:14.2px;height:14.2px;border:2px solid #8fa9c9;border-radius:2.5px;box-sizing:border-box"></div>
<div class="t" style="left:353.9px;top:669px;font-size:11.5px;line-height:11.5px;color:#3a4d63;font-weight:400;transform:scaleX(0.905);transform-origin:0 0;">Cups-9</div>
<div class="t" style="left:433.8px;top:669px;font-size:11.5px;line-height:11.5px;color:#3a4d63;font-weight:400;transform:scaleX(0.935);transform-origin:0 0;">6-PF-2008-G4</div>
<svg style="position:absolute;left:1100.85px;top:666.75px;" width="13.2" height="13.2" viewBox="0 0 24 24"><path d="M13 3c-4.97 0-9 4.03-9 9H1l3.89 3.89.07.14L9 12H6c0-3.87 3.13-7 7-7s7 3.13 7 7-3.13 7-7 7c-1.93 0-3.68-.79-4.94-2.06l-1.42 1.42C8.27 19.99 10.51 21 13 21c4.97 0 9-4.03 9-9s-4.03-9-9-9zm-1 5v5l4.28 2.54.72-1.21-3.5-2.08V8H12z" fill="#d4930a"/></svg>
<div class="t" style="left:1115.9px;top:669px;font-size:11.5px;line-height:11.5px;color:#3a4d63;font-weight:400;transform:scaleX(0.9546);transform-origin:0 0;">Pending</div>
<svg style="position:absolute;left:1304.5px;top:666.4px;" width="16.8" height="16.8" viewBox="0 0 24 24"><path d="M18.25 7.6l-5.5-3.18c-.46-.27-1.04-.27-1.5 0L5.75 7.6c-.46.27-.75.76-.75 1.3v6.35c0 .54.29 1.03.75 1.3l5.5 3.18c.46.27 1.04.27 1.5 0l5.5-3.18c.46-.27.75-.76.75-1.3V8.9c0-.54-.29-1.03-.75-1.3zM7 14.96v-4.62l4 2.32v4.61l-4-2.31zm5-4.04L8 8.61l4-2.31 4 2.31-4 2.31zm1 6.34v-4.61l4-2.32v4.62l-4 2.31zM7 2H3.5C2.67 2 2 2.67 2 3.5V7h2V4h3V2zm10 0h3.5c.83 0 1.5.67 1.5 1.5V7h-2V4h-3V2zM7 22H3.5c-.83 0-1.5-.67-1.5-1.5V17h2v3h3v2zm10 0h3.5c.83 0 1.5-.67 1.5-1.5V17h-2v3h-3v2z" fill="#3cc29e"/></svg>
<div class="t" style="left:1327.9px;top:669px;font-size:11.5px;line-height:11.5px;color:#1f2937;font-weight:400;transform:scaleX(0.9182);transform-origin:0 0;">3D</div>
<div style="left:318.5px;top:708.0px;width:14.2px;height:14.2px;border:2px solid #8fa9c9;border-radius:2.5px;box-sizing:border-box"></div>
<div class="t" style="left:353.9px;top:710px;font-size:11.5px;line-height:11.5px;color:#3a4d63;font-weight:400;transform:scaleX(0.905);transform-origin:0 0;">Cups-10</div>
<div class="t" style="left:433.8px;top:710px;font-size:11.5px;line-height:11.5px;color:#3a4d63;font-weight:400;transform:scaleX(0.935);transform-origin:0 0;">10-PG-304-A</div>
<svg style="position:absolute;left:1100.85px;top:708.25px;" width="13.2" height="13.2" viewBox="0 0 24 24"><path d="M13 3c-4.97 0-9 4.03-9 9H1l3.89 3.89.07.14L9 12H6c0-3.87 3.13-7 7-7s7 3.13 7 7-3.13 7-7 7c-1.93 0-3.68-.79-4.94-2.06l-1.42 1.42C8.27 19.99 10.51 21 13 21c4.97 0 9-4.03 9-9s-4.03-9-9-9zm-1 5v5l4.28 2.54.72-1.21-3.5-2.08V8H12z" fill="#d4930a"/></svg>
<div class="t" style="left:1115.9px;top:710px;font-size:11.5px;line-height:11.5px;color:#3a4d63;font-weight:400;transform:scaleX(0.9546);transform-origin:0 0;">Pending</div>
<svg style="position:absolute;left:1304.5px;top:707.9px;" width="16.8" height="16.8" viewBox="0 0 24 24"><path d="M18.25 7.6l-5.5-3.18c-.46-.27-1.04-.27-1.5 0L5.75 7.6c-.46.27-.75.76-.75 1.3v6.35c0 .54.29 1.03.75 1.3l5.5 3.18c.46.27 1.04.27 1.5 0l5.5-3.18c.46-.27.75-.76.75-1.3V8.9c0-.54-.29-1.03-.75-1.3zM7 14.96v-4.62l4 2.32v4.61l-4-2.31zm5-4.04L8 8.61l4-2.31 4 2.31-4 2.31zm1 6.34v-4.61l4-2.32v4.62l-4 2.31zM7 2H3.5C2.67 2 2 2.67 2 3.5V7h2V4h3V2zm10 0h3.5c.83 0 1.5.67 1.5 1.5V7h-2V4h-3V2zM7 22H3.5c-.83 0-1.5-.67-1.5-1.5V17h2v3h3v2zm10 0h3.5c.83 0 1.5-.67 1.5-1.5V17h-2v3h-3v2z" fill="#3cc29e"/></svg>
<div class="t" style="left:1327.9px;top:710px;font-size:11.5px;line-height:11.5px;color:#1f2937;font-weight:400;transform:scaleX(0.9182);transform-origin:0 0;">3D</div>
<div class="t" style="left:318.7px;top:753px;font-size:11.4px;line-height:11.4px;color:#1f2937;font-weight:400;">2 rows selected</div>
<div class="t" style="left:1277.3px;top:753px;font-size:11px;line-height:11px;color:#1f2937;font-weight:400;">Rows per page:</div>
<div class="t" style="left:1368.9px;top:752px;font-size:10.6px;line-height:10.6px;color:#1f2f45;font-weight:400;transform:scaleX(0.9070);transform-origin:0 0;">10</div>
<div style="left:1386.4px;top:755.7px;width:0;height:0;border-left:3.7px solid transparent;border-right:3.7px solid transparent;border-top:4.4px solid #757575;"></div>
<div class="t" style="left:1425.7px;top:752px;font-size:11.6px;line-height:11.6px;color:#1f2937;font-weight:400;">1–10 of 24</div>
<svg style="position:absolute;left:1505px;top:750px;" width="14" height="16" viewBox="0 0 14 16"><path d="M10.3 3.9 L5.2 8 L10.3 12.1" fill="none" stroke="#c4c8cd" stroke-width="1.7"/></svg>
<svg style="position:absolute;left:1537px;top:750px;" width="14" height="16" viewBox="0 0 14 16"><path d="M4.8 3.9 L9.9 8 L4.8 12.1" fill="none" stroke="#1f3450" stroke-width="1.7"/></svg>
<div style="left:766px;top:292px;width:377px;height:364px;background:#fff;border-radius:5px;box-shadow:0 2px 4px -1px rgba(0,0,0,.16),0 4px 8px 0 rgba(0,0,0,.08),0 1px 12px 0 rgba(0,0,0,.08);z-index:20"></div>
<div class="t" style="left:784.9px;top:313px;font-size:13.1px;line-height:13.1px;color:#1d3557;font-weight:400;transform:scaleX(1.0016);transform-origin:0 0;z-index:21;-webkit-text-stroke:0.2px currentColor">Add point of interests to report</div>
<svg style="position:absolute;left:1106px;top:313px;z-index:21" width="15" height="15" viewBox="0 0 15 15"><path d="M2 2 L13 13 M13 2 L2 13" stroke="#1d3557" stroke-width="1.8"/></svg>
<svg style="position:absolute;left:789px;top:355px;z-index:21" width="16" height="16" viewBox="0 0 16 16"><circle cx="8.2" cy="8" r="6" fill="none" stroke="#0f1a28" stroke-width="1.4"/><circle cx="8.2" cy="8" r="3.1" fill="#0f1a28"/></svg>
<div class="t" style="left:812.8px;top:358px;font-size:12.8px;line-height:12.8px;color:#3b5575;font-weight:400;z-index:21">Create new report</div>
<svg style="position:absolute;left:952px;top:355px;z-index:21" width="16" height="16" viewBox="0 0 16 16"><circle cx="8" cy="8" r="6" fill="none" stroke="#6d6d6d" stroke-width="1.4"/></svg>
<div class="t" style="left:975.8px;top:357px;font-size:13.2px;line-height:13.2px;color:#3b5575;font-weight:400;z-index:21">Add to existing report</div>
<div class="t" style="left:791.7px;top:399px;font-size:9.8px;line-height:9.8px;color:#9e9e9e;font-weight:400;transform:scaleX(0.9746);transform-origin:0 0;z-index:21">Report name</div>
<div class="t" style="left:791.7px;top:417px;font-size:12.4px;line-height:12.4px;color:#3b5575;font-weight:400;z-index:21">Guide Report</div>
<div style="left:791px;top:437px;width:326px;height:1px;background:#999999;z-index:21"></div>
<div class="t" style="left:791.5px;top:471px;font-size:9.8px;line-height:9.8px;color:#9e9e9e;font-weight:400;transform:scaleX(0.975);transform-origin:0 0;z-index:21">Report type</div>
<div class="t" style="left:791.5px;top:489px;font-size:13.1px;line-height:13.1px;color:#3b5575;font-weight:400;z-index:21">MI workpack</div>
<div style="left:930.7px;top:494.4px;width:0;height:0;border-left:4.0px solid transparent;border-right:4.0px solid transparent;border-top:4.4px solid #5a5a5a;z-index:21"></div>
<div style="left:791px;top:508px;width:153px;height:1px;background:#999999;z-index:21"></div>
<div class="t" style="left:963.5px;top:471px;font-size:9.8px;line-height:9.8px;color:#9e9e9e;font-weight:400;transform:scaleX(0.975);transform-origin:0 0;z-index:21">Workpack number</div>
<div class="t" style="left:963.5px;top:488px;font-size:12.5px;line-height:12.5px;color:#3b5575;font-weight:400;z-index:21">WP-100-123</div>
<div style="left:963px;top:508px;width:154px;height:1px;background:#999999;z-index:21"></div>
<div class="t" style="left:791.5px;top:523px;font-size:9.8px;line-height:9.8px;color:#9e9e9e;font-weight:400;transform:scaleX(0.975);transform-origin:0 0;z-index:21">Due date</div>
<div class="t" style="left:791.5px;top:538px;font-size:12.8px;line-height:12.8px;color:#3b5575;font-weight:400;z-index:21">21 Aug 2024</div>
<svg style="position:absolute;left:928px;top:536px;z-index:21" width="16" height="16" viewBox="0 0 16 16"><rect x="2.4" y="3.2" width="11.2" height="10.6" rx="1.2" fill="none" stroke="#6f8db3" stroke-width="1.3"/><path d="M2.4 6.6 H13.6 M5.2 1.6 V4.4 M10.8 1.6 V4.4" stroke="#6f8db3" stroke-width="1.3"/><rect x="4.6" y="8.6" width="2.2" height="2" fill="#6f8db3"/></svg>
<div style="left:791px;top:559px;width:153px;height:1px;background:#999999;z-index:21"></div>
<div class="t" style="left:963.5px;top:523px;font-size:9.8px;line-height:9.8px;color:#9e9e9e;font-weight:400;transform:scaleX(0.975);transform-origin:0 0;z-index:21">Status</div>
<div class="t" style="left:963.5px;top:540px;font-size:13px;line-height:13px;color:#3b5575;font-weight:400;z-index:21">Backlog</div>
<div style="left:1103.7px;top:546px;width:0;height:0;border-left:4.1px solid transparent;border-right:4.1px solid transparent;border-top:4.2px solid #5a5a5a;z-index:21"></div>
<div style="left:963px;top:559px;width:154px;height:1px;background:#999999;z-index:21"></div>
<div style="left:942px;top:610px;width:63px;height:25px;border:1px solid #4a6687;border-radius:3px;z-index:21"></div>
<div class="t" style="left:958.1px;top:619px;font-size:10.2px;line-height:10.2px;color:#3a5576;font-weight:700;transform:scaleX(0.9874);transform-origin:0 0;z-index:21">Cancel</div>
<div style="left:1026px;top:610px;width:97px;height:27px;background:#223f62;border-radius:3px;box-shadow:0 1px 3px rgba(0,0,0,.3);z-index:21"></div>
<div class="t" style="left:1041px;top:619px;font-size:10.4px;line-height:10.4px;color:#ffffff;font-weight:700;transform:scaleX(0.9925);transform-origin:0 0;z-index:21">Create Report</div>
</body></html>
